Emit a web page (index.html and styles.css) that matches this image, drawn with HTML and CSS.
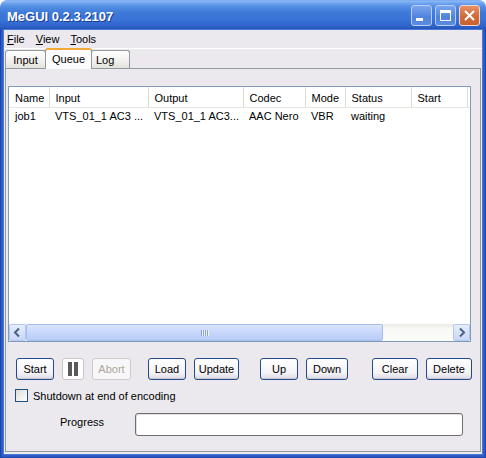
FILE: index.html
```html
<!DOCTYPE html>
<html lang="en">

<head>
    <meta charset="UTF-8">
    <meta name="viewport" content="width=device-width, initial-scale=1.0">
    <title>MeGUI 0.2.3.2107</title>
    <link rel="stylesheet" href="styles.css">
</head>

<body>
    <div class="window">
        <div class="titlebar">
            <span class="title">MeGUI 0.2.3.2107</span>
            <div class="caption-buttons">
                <span class="cap-btn">
                    <svg width="19" height="19" viewBox="0 0 19 19"><rect x="4" y="12" width="7" height="3" fill="#fff" /></svg>
                </span>
                <span class="cap-btn">
                    <svg width="19" height="19" viewBox="0 0 19 19">
                        <rect x="4.5" y="4.5" width="10" height="10" fill="none" stroke="#fff" />
                        <rect x="4" y="4" width="11" height="3" fill="#fff" />
                    </svg>
                </span>
                <span class="cap-btn close">
                    <svg width="19" height="19" viewBox="0 0 19 19">
                        <path d="M5 5 L14 14 M14 5 L5 14" stroke="#fff" stroke-width="2" />
                    </svg>
                </span>
            </div>
        </div>
        <div class="frame">
            <div class="client">
                <div class="menubar">
                    <span class="menu-item"><u>F</u>ile</span>
                    <span class="menu-item"><u>V</u>iew</span>
                    <span class="menu-item"><u>T</u>ools</span>
                </div>

                <div class="tabs">
                    <span class="tab tab-input">Input</span>
                    <span class="tab tab-queue active">Queue</span>
                    <span class="tab tab-log">Log</span>
                </div>

                <div class="tabpage">
                    <div class="listview">
                        <div class="list-body">
                            <table>
                                <colgroup>
                                    <col style="width: 40px">
                                    <col style="width: 99px">
                                    <col style="width: 95px">
                                    <col style="width: 62px">
                                    <col style="width: 40px">
                                    <col style="width: 66px">
                                    <col style="width: 56px">
                                    <col>
                                </colgroup>
                                <thead>
                                    <tr>
                                        <th>Name</th>
                                        <th>Input</th>
                                        <th>Output</th>
                                        <th>Codec</th>
                                        <th>Mode</th>
                                        <th>Status</th>
                                        <th>Start</th>
                                        <th class="filler"></th>
                                    </tr>
                                </thead>
                                <tbody>
                                    <tr>
                                        <td>job1</td>
                                        <td>VTS_01_1 AC3 ...</td>
                                        <td>VTS_01_1 AC3...</td>
                                        <td>AAC Nero</td>
                                        <td>VBR</td>
                                        <td>waiting</td>
                                        <td></td>
                                        <td></td>
                                    </tr>
                                </tbody>
                            </table>
                        </div>
                        <div class="hscroll">
                            <span class="sb-btn">
                                <svg width="15" height="15" viewBox="0 0 15 15"><path d="M9 3.5 L5 7.5 L9 11.5" fill="none" stroke="#4d6185" stroke-width="2" /></svg>
                            </span>
                            <span class="sb-thumb"><span class="grip"></span></span>
                            <span class="sb-track"></span>
                            <span class="sb-btn">
                                <svg width="15" height="15" viewBox="0 0 15 15"><path d="M6 3.5 L10 7.5 L6 11.5" fill="none" stroke="#4d6185" stroke-width="2" /></svg>
                            </span>
                        </div>
                    </div>

                    <div class="buttons">
                        <button class="btn w-start">Start</button>
                        <button class="btn pause">
                            <svg width="12" height="14" viewBox="0 0 12 14">
                                <rect x="1" y="0" width="4" height="14" fill="#5a5a5a" />
                                <rect x="7" y="0" width="4" height="14" fill="#5a5a5a" />
                            </svg>
                        </button>
                        <button class="btn disabled w-abort">Abort</button>
                        <button class="btn w-load">Load</button>
                        <button class="btn w-update">Update</button>
                        <button class="btn w-up">Up</button>
                        <button class="btn w-down">Down</button>
                        <button class="btn w-clear">Clear</button>
                        <button class="btn w-delete">Delete</button>
                    </div>

                    <label class="check-row">
                        <span class="checkbox"></span>
                        Shutdown at end of encoding
                    </label>

                    <div class="progress-row">
                        <span class="progress-label">Progress</span>
                        <div class="progressbar"></div>
                    </div>
                </div>
            </div>
        </div>
    </div>
</body>

</html>
```

FILE: styles.css
```css
body {
    margin: 0;
    padding: 0;
    background-color: #fff;
    font-family: "Liberation Sans", Arial, sans-serif;
    font-size: 11px;
    color: #000;
}

.window {
    width: 486px;
    height: 458px;
    display: flex;
    flex-direction: column;
}

/* title bar */

.titlebar {
    height: 30px;
    flex: none;
    display: flex;
    align-items: center;
    justify-content: space-between;
    padding: 0 6px 0 7px;
    box-sizing: border-box;
    border-radius: 7px 7px 0 0;
    background: linear-gradient(to bottom,
            #6c9fea 0px,
            #8fbaf5 1px,
            #72a6f0 3px,
            #5590e4 6px,
            #3f7bda 12px,
            #3873d6 20px,
            #2f64cb 26px,
            #2853b8 29px,
            #2853b8 30px);
}

.title {
    color: #fff;
    font-weight: bold;
    font-size: 13px;
    padding-top: 2px;
    text-shadow: 1px 1px 0 #1a3a94;
}

.caption-buttons {
    display: flex;
    gap: 3px;
    padding-top: 1px;
}

.cap-btn {
    width: 19px;
    height: 19px;
    border: 1px solid #b9cdf2;
    border-radius: 3px;
    background: linear-gradient(to bottom, #79a6ee, #4f82dc 60%, #5a8ce0);
    display: flex;
}

.cap-btn.close {
    border-color: #f2d6c8;
    background: linear-gradient(to bottom, #e69066, #d06a38 55%, #c96332);
}

/* window frame */

.frame {
    flex: 1;
    display: flex;
    padding: 0 4px 4px;
    background-color: #2d5cc9;
    box-shadow: inset 1px 0 #1d44a6, inset -1px 0 #1d44a6, inset 0 -1px #1d44a6;
}

.client {
    flex: 1;
    display: flex;
    flex-direction: column;
    background-color: #ebe9ed;
    box-shadow: 0 0 0 1px #4a7ad8;
}

/* menu */

.menubar {
    height: 18px;
    display: flex;
    align-items: center;
    gap: 11px;
    padding-left: 3px;
    border-bottom: 1px solid #fff;
}

/* tabs */

.tabs {
    height: 20px;
    display: flex;
    align-items: flex-end;
    padding-left: 1px;
    margin-bottom: -1px;
}

.tab {
    height: 18px;
    box-sizing: border-box;
    border: 1px solid #919b9c;
    border-bottom: none;
    border-radius: 3px 3px 0 0;
    background: linear-gradient(to bottom, #fff, #f1f0ec 60%, #e4e2dc);
    display: flex;
    justify-content: center;
    padding-top: 3px;
    margin-bottom: 1px;
}

.tab-input {
    width: 41px;
}

.tab-queue {
    width: 47px;
}

.tab-log {
    width: 39px;
    margin-left: -1px;
    justify-content: flex-start;
    padding-left: 4px;
}

.tab.active {
    position: relative;
    z-index: 1;
    height: 21px;
    margin-bottom: 0;
    margin-left: -1px;
    padding-top: 3px;
    border-top: 2px solid #f2a93a;
    background: #fcfcfe;
}

.tabpage {
    flex: 1;
    margin: 0 1px 2px;
    border: 1px solid #919b9c;
    padding: 17px 0 0 2px;
}

/* list view */

.listview {
    width: 463px;
    height: 256px;
    box-sizing: border-box;
    border: 1px solid #7f9db9;
    background-color: #fff;
    display: flex;
    flex-direction: column;
}

.list-body {
    flex: 1;
    overflow: hidden;
}

table {
    width: 461px;
    table-layout: fixed;
    border-collapse: collapse;
}

th,
td {
    text-align: left;
    font-weight: normal;
    padding: 0 0 0 6px;
    white-space: nowrap;
    overflow: hidden;
}

th {
    height: 18px;
    padding-top: 2px;
    border-right: 1px solid #dedcd3;
    border-bottom: 1px solid #e8e6df;
}

th.filler {
    border-right: none;
}

td {
    height: 14px;
    padding-top: 1px;
}

.hscroll {
    height: 17px;
    display: flex;
    background: linear-gradient(to bottom, #ebeae3, #f9f9f7 30%, #fbfbf9);
}

.sb-btn {
    width: 15px;
    height: 15px;
    border: 1px solid #b6c7ef;
    border-radius: 2px;
    background: linear-gradient(to bottom, #e6eefc, #c8d7f7);
    display: flex;
}

.sb-thumb {
    width: 355px;
    height: 15px;
    border: 1px solid #a9bde9;
    border-radius: 2px;
    background: linear-gradient(to bottom, #d9e4fd, #c4d5fa 60%, #b9ccf6);
    display: flex;
    align-items: center;
    justify-content: center;
}

.grip {
    width: 8px;
    height: 6px;
    background: repeating-linear-gradient(to right, #8aa2d8 0, #8aa2d8 1px, #eef3fe 1px, #eef3fe 2px);
}

.sb-track {
    flex: 1;
}

/* buttons */

.buttons {
    display: flex;
    margin-top: 16px;
    padding-left: 8px;
}

.btn {
    height: 22px;
    margin: 0;
    padding: 0;
    border: 1px solid #234a8c;
    border-radius: 3px;
    background: linear-gradient(to bottom, #ffffff, #f3f2f6 70%, #dcdae2);
    font-family: inherit;
    font-size: 11px;
    color: #000;
    box-shadow: inset 0 -1px #c9c7d4;
}

.btn.pause {
    width: 22px;
    margin-left: 8px;
    border-color: #c9c7c3;
    background: #fff;
    box-shadow: none;
    display: flex;
    align-items: center;
    justify-content: center;
}

.btn.disabled {
    border-color: #cdcbc8;
    background: #f7f6f8;
    color: #aca899;
    box-shadow: none;
}

.w-start {
    width: 38px;
}

.w-abort {
    width: 39px;
    margin-left: 8px;
}

.w-load {
    width: 38px;
    margin-left: 17px;
}

.w-update {
    width: 45px;
    margin-left: 8px;
}

.w-up {
    width: 38px;
    margin-left: 21px;
}

.w-down {
    width: 42px;
    margin-left: 8px;
}

.w-clear {
    width: 46px;
    margin-left: 24px;
}

.w-delete {
    width: 46px;
    margin-left: 8px;
}

/* checkbox */

.check-row {
    display: flex;
    align-items: center;
    gap: 5px;
    margin-top: 9px;
    padding-left: 7px;
    height: 13px;
}

.checkbox {
    width: 11px;
    height: 11px;
    border: 1px solid #1c5180;
    background: linear-gradient(135deg, #dcdcd7, #fff);
}

/* progress */

.progress-row {
    display: flex;
    margin-top: 11px;
    padding-left: 52px;
}

.progress-label {
    width: 75px;
    padding-top: 3px;
}

.progressbar {
    width: 328px;
    height: 23px;
    box-sizing: border-box;
    border: 1px solid #6e6e6e;
    border-radius: 3px;
    background-color: #fff;
    box-shadow: inset 1px 1px #e0e0e0;
}
```
